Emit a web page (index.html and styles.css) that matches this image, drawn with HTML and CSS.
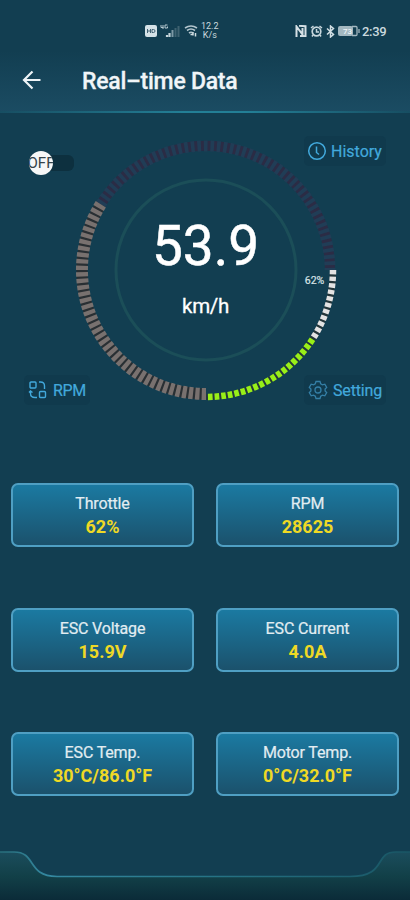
FILE: index.html
```html
<!DOCTYPE html>
<html lang="en">
<head>
<meta charset="utf-8">
<title>Real-time Data</title>
<link rel="stylesheet" href="styles.css">
</head>
<body>
<div class="screen">
  <header class="top">
    <div class="status">
      <div class="status-left">
        <svg width="12" height="12" viewBox="0 0 12 12"><rect width="12" height="12" rx="2" fill="#d5e2e7"/><path d="M2.5 4v4M2.5 6h3M5.5 4v4M7 4.5h1.5q1.5 0 1.5 1.5t-1.5 1.5H7z" fill="none" stroke="#426273"/></svg>
        <svg class="signal" width="20" height="14" viewBox="0 0 20 14"><path d="M1 1v2.5h2.500M3 1v4M5 1h2.500M5 1v3h2.500V2.500" fill="none" stroke="#b5c8d0"/><path d="M7 13v-2M9.500 13V9" stroke="#c5d5db" stroke-width="2.200"/><path d="M12.500 13V6" stroke="#7d99a5" stroke-width="2"/><path d="M15.500 13V4M18.500 13V2" stroke="#3e6271" stroke-width="2"/></svg>
        <svg class="wifi" width="14" height="12" viewBox="0 0 14 12"><path d="M1 3q6-4 12 0M3 5.500q4-3 8 0M5 8q2-1.500 4 0" fill="none" stroke="#b3c6ce" stroke-width="1.600"/><path d="M6.500 9.500h2M9 7v3.500M11.500 8v3.500" stroke="#d0dde1" stroke-width="1.500"/></svg>
        <div class="rate"><span>12.2</span><span>K/s</span></div>
      </div>
      <div class="status-right">
        <svg width="12" height="12" viewBox="0 0 12 12"><path d="M1.500 12V1.500L7.500 9.500V3M4 .8l6.500.5v10L5 11" fill="none" stroke="#d5e0e5" stroke-width="2"/></svg>
        <svg width="13" height="12" viewBox="0 0 13 12"><circle cx="6.500" cy="6.500" r="4.300" fill="none" stroke="#c8d7dd" stroke-width="1.700"/><path d="M1 3l2.500-2M12 3L9.500 1M6.500 4v3H9M3 10l-1 1.500M10 10l1 1.500" fill="none" stroke="#c8d7dd" stroke-width="1.500"/></svg>
        <svg width="9" height="13" viewBox="0 0 9 13"><path d="M1 3.500l6.500 6-3 2.500V1l3 2.500-6.500 6" fill="none" stroke="#d2dfe4" stroke-width="1.500"/></svg>
        <svg width="22" height="12" viewBox="0 0 22 12"><rect x="0" y="1" width="15" height="10" rx="2" fill="#a3b8c1"/><path d="M14 1.500h4q1 0 1 1v7q0 1-1 1h-4M21 4v4" fill="none" stroke="#a3b8c1" stroke-width="1.300"/><text x="5" y="9" class="battery">73</text></svg>
        <span class="clock">2:39</span>
      </div>
    </div>
    <div class="bar">
      <svg class="back" width="20" height="20" viewBox="0 0 20 20"><path d="M18.500 10H2M10.500 1.500L2 10l8.500 8.500" fill="none" stroke="#eef4f7" stroke-width="2.200"/></svg>
      <h1>Real–time Data</h1>
    </div>
    <div class="rule"></div>
  </header>

  <main>
    <section class="dash">
      <svg class="gauge" width="264" height="264" viewBox="-132 -132 264 264">
        <circle class="inner" r="90"/>
        <path class="dim-back" d="M-105.200-65.700A124 124 0 0 1 124 0"/>
        <path class="dim" d="M-105.200-65.700A124 124 0 0 1 124 0" pathLength="148"/>
        <path class="gray-back" d="M0 124A124 124 0 0 1-105.200-65.700"/>
        <path class="gray" d="M0 124A124 124 0 0 1-105.200-65.700" pathLength="122"/>
        <path class="lit-back" d="M127 0A127 127 0 0 1 0 127"/>
        <path class="white" d="M127 0A127 127 0 0 1 106.500 69.200" pathLength="33"/>
        <path class="green" d="M106.500 69.200A127 127 0 0 1 0 127" pathLength="57"/>
        <text class="percent" x="108.500" y="14">62%</text>
        <text class="speed" x="-.5" y="-5">53.9</text>
        <text class="unit" x="-.5" y="43">km/h</text>
      </svg>
      <div class="toggle"><span class="knob"><span>OFF</span></span></div>
      <div class="chip history">
        <svg width="20" height="20" viewBox="0 0 20 20"><circle cx="10" cy="10" r="8.300" fill="none" stroke="#42a9dc" stroke-width="1.500"/><path d="M9.500 5.500v6l2.500 2" fill="none" stroke="#42a9dc" stroke-width="1.500"/></svg>
        <span>History</span>
      </div>
      <div class="chip rpm">
        <svg width="20" height="20" viewBox="0 0 20 20" fill="none" stroke="#42a9dc" stroke-width="1.400"><rect x="2" y="2" width="6" height="6" rx="1"/><rect x="11.500" y="11.500" width="6" height="6" rx="1"/><path d="M11 2h1.500q4 0 4 4v3M9 17.500H7q-4.500 0-4.500-4V11M1 12.500l1.500-1.500 2 1.500"/></svg>
        <span>RPM</span>
      </div>
      <div class="chip setting">
        <svg width="20" height="20" viewBox="0 0 20 20" fill="none" stroke="#347fa6" stroke-width="1.300"><path d="M8 1.500h4l.7 2.300 1.700 1 2.400-.6 1.900 3.300-1.600 1.600v1.800l1.600 1.600-1.900 3.300-2.400-.6-1.700 1-.7 2.300H8l-.7-2.300-1.700-1-2.400.6-1.900-3.300 1.600-1.600V9.100L1.300 7.500l1.900-3.300 2.400.6 1.700-1z"/><circle cx="10" cy="10" r="3"/></svg>
        <span>Setting</span>
      </div>
    </section>

    <section class="cards">
      <div class="card"><span class="label">Throttle</span><span class="value">62%</span></div>
      <div class="card"><span class="label">RPM</span><span class="value">28625</span></div>
      <div class="card"><span class="label">ESC Voltage</span><span class="value">15.9V</span></div>
      <div class="card"><span class="label">ESC Current</span><span class="value">4.0A</span></div>
      <div class="card"><span class="label">ESC Temp.</span><span class="value">30°C/86.0°F</span></div>
      <div class="card"><span class="label">Motor Temp.</span><span class="value">0°C/32.0°F</span></div>
    </section>
  </main>

  <svg class="footer" width="410" height="50" viewBox="0 0 410 50">
    <defs>
      <linearGradient id="base" x1="0" y1="0" x2="0" y2="1"><stop offset="0" stop-color="#1b4d5d"/><stop offset=".5" stop-color="#124048"/><stop offset="1" stop-color="#0b2b38"/></linearGradient>
      <linearGradient id="edge" x1="0" y1="0" x2="410" y2="0" gradientUnits="userSpaceOnUse"><stop offset="0" stop-color="#286e7b"/><stop offset=".12" stop-color="#3488a0"/><stop offset=".5" stop-color="#267486"/><stop offset="1" stop-color="#195665"/></linearGradient>
    </defs>
    <path d="M0 2h14C37 2 26 26 57 26.500H350C388 26.500 373 2 396 2h14v48H0z" fill="url(#base)"/>
    <path d="M0 2h14C37 2 26 26 57 26.500H350C388 26.500 373 2 396 2h14" fill="none" stroke="url(#edge)" stroke-width="1.700"/>
  </svg>
</div>
</body>
</html>
```
FILE: styles.css
```css
* { box-sizing: border-box; }
body { margin: 0; background: #123e51; font-family: Roboto, "Liberation Sans", sans-serif; }
svg { display: block; flex: none; }
.screen { width: 410px; height: 900px; display: flex; flex-direction: column; background: #123e51; overflow: hidden; }

.top { height: 113px; display: flex; flex-direction: column; background: linear-gradient(#123e51 45%, #1b4c63); }
.status { height: 50px; padding: 12px 22px 0 145px; display: flex; align-items: center; justify-content: space-between; color: #cad9df; }
.status-left, .status-right { display: flex; align-items: center; }
.status-left { height: 24px; }
.signal { margin-left: 3px; }
.wifi { margin-left: 4px; }
.rate { margin-left: 3px; display: flex; flex-direction: column; align-items: center; font-size: 9px; line-height: 9px; }
.status-right { gap: 3px; }
.battery { font: 500 8px Roboto, sans-serif; fill: #eef5f7; }
.clock { width: 25px; font-size: 13px; letter-spacing: -0.3px; font-weight: 500; margin-right: 1px; margin-left: -1px; }
.bar { height: 61px; padding-left: 22px; display: flex; align-items: center; }
.back { margin-bottom: 2px; }
h1 { margin: 2px 0 0 40px; font-size: 23px; line-height: 28px; font-weight: 500; letter-spacing: -0.25px; color: #f0f5f8; white-space: nowrap; -webkit-text-stroke: 0.3px #f0f5f8; }
.rule { height: 2px; background: linear-gradient(90deg, #174e62, #237f96 45%, #237f96 60%, #174e62); }

.dash { height: 371px; padding: 23px 24px 0; display: grid; grid-template: 239px 30px / 1fr 1fr; }
.gauge { grid-area: 1 / 1 / 3 / 3; justify-self: center; margin-left: 1px; margin-top: 2px; }
.inner { fill: none; stroke: #1b4e58; stroke-width: 3; }
.dim-back, .dim, .gray-back, .gray, .lit-back, .white, .green { fill: none; }
.dim-back { stroke: #2b2c45; stroke-width: 10; }
.dim { stroke: #203d56; stroke-width: 11; stroke-dasharray: 1.7 1.3; }
.gray-back { stroke: #292f33; stroke-width: 11; }
.gray { stroke: #78716f; stroke-width: 12; stroke-dasharray: 2 1; }
.lit-back { stroke: #25363a; stroke-width: 6; }
.white { stroke: #e3e3e3; stroke-width: 6.5; stroke-dasharray: 2 1; }
.green { stroke: #98ef18; stroke-width: 6.5; stroke-dasharray: 2.1 .9; }
.gauge text { text-anchor: middle; font-family: Roboto, sans-serif; fill: #fff; }
.gauge .percent { font-size: 10.5px; fill: #d9e3e7; stroke: #d9e3e7; stroke-width: 0.2px; }
.gauge .speed { font-size: 55px; stroke: #fff; stroke-width: 0.5px; }
.gauge .unit { font-size: 20.5px; letter-spacing: -0.3px; stroke: #fff; stroke-width: 0.3px; }

.toggle { grid-area: 1 / 1; margin: 19px 0 0 6px; width: 44px; height: 16px; border-radius: 6px; background: #0d303f; }
.knob { width: 24px; height: 24px; margin-top: -4px; margin-left: -1px; border-radius: 50%; background: #f6f7f7; display: flex; align-items: center; justify-content: center; overflow: hidden; color: #34434a; font-size: 15px; }
.chip { width: 82px; height: 30px; padding: 0 4px; display: flex; align-items: center; gap: 5px; border-radius: 5px; background: #103a4d; color: #42a9dc; font-size: 16px; white-space: nowrap; -webkit-text-stroke: 0.2px #42a9dc; }
.history { grid-area: 1 / 2; justify-self: end; }
.rpm { grid-area: 2 / 1; width: 66px; }
.rpm span { letter-spacing: -0.3px; }
.setting { grid-area: 2 / 2; justify-self: end; }
.history, .setting { padding-left: 3px; gap: 4px; }
.setting { padding-left: 4px; gap: 5px; }
.setting span { letter-spacing: -0.15px; }

.cards { padding: 0 11px; display: grid; grid-template-columns: 183px 183px; grid-auto-rows: 64px; row-gap: 60.500px; justify-content: space-between; margin-top: -0.8px; }
.card { display: flex; flex-direction: column; align-items: center; justify-content: center; padding-top: 1.500px; border: 2px solid #4f9fc3; border-radius: 7px; background: linear-gradient(#1b7ba3, #1b506a) border-box; }
.label { font-size: 16px; line-height: 22px; letter-spacing: -0.15px; color: #e2edf2; -webkit-text-stroke: 0.2px #e2edf2; }
.value { font-size: 18px; line-height: 23px; font-weight: 700; color: #efd925; }
.footer { margin-top: auto; }
```
